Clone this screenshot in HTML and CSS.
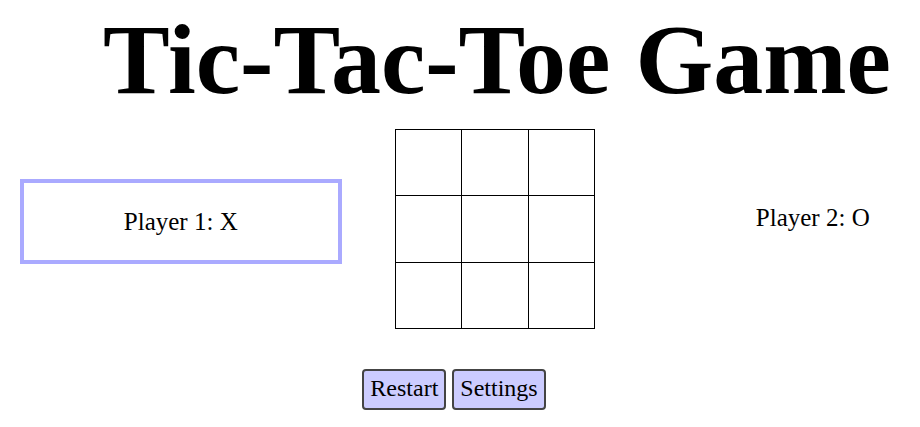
FILE: index.html
```html
<!DOCTYPE html>
<html lang="en">
<head>
    <meta charset="UTF-8">
    <meta name="viewport" content="width=device-width, initial-scale=1.0">
    <title>Tic-Tac-Toe Game</title>
    <link rel="stylesheet" href="styles.css">
</head>
<body>
    <h1 class="title">Tic-Tac-Toe Game</h1>
    <div class="game">
        <div class="player player-active" id="player1">Player 1: X</div>
        <div class="board">
            <div class="cell"></div>
            <div class="cell"></div>
            <div class="cell"></div>
            <div class="cell"></div>
            <div class="cell"></div>
            <div class="cell"></div>
            <div class="cell"></div>
            <div class="cell"></div>
            <div class="cell"></div>
        </div>
        <div class="player" id="player2">Player 2: O</div>
    </div>
    <div class="controls">
        <button class="btn">Restart</button>
        <button class="btn">Settings</button>
    </div>
</body>
</html>
```

FILE: styles.css
```css
body {
    font-family: "Liberation Serif", "Times New Roman", serif;
    margin: 8px;
    background-color: #fff;
    color: #000;
}
.title {
    font-size: 100px;
    font-weight: bold;
    line-height: 1.15;
    margin: -6px 0 0;
    padding-left: 74px;
    text-align: center;
}
.game {
    display: flex;
    align-items: flex-start;
    margin-top: 12px;
}
.player {
    box-sizing: border-box;
    width: 324px;
    height: 85px;
    margin-top: 50px;
    border: 4px solid transparent;
    font-size: 25px;
    display: flex;
    align-items: center;
    justify-content: center;
}
.player-active {
    margin-left: 12px;
    border-color: #aaf;
}
#player2 {
    width: 200px;
    margin-left: 119px;
    margin-top: 46px;
}
.board {
    display: grid;
    grid-template-columns: 65px 66px 65px;
    grid-template-rows: 65px 66px 65px;
    gap: 1px;
    padding: 1px;
    background-color: #000;
    margin-left: 53px;
}
.cell {
    background-color: #fff;
}
.controls {
    text-align: center;
    margin-top: 40px;
    padding-right: 12px;
}
.btn {
    font-family: "Liberation Serif", "Times New Roman", serif;
    font-size: 24px;
    background-color: #ccf;
    color: #000;
    border: 2px solid #444;
    border-radius: 4px;
    padding: 4px 6px 6px;
    margin: 0 1px;
}
```
